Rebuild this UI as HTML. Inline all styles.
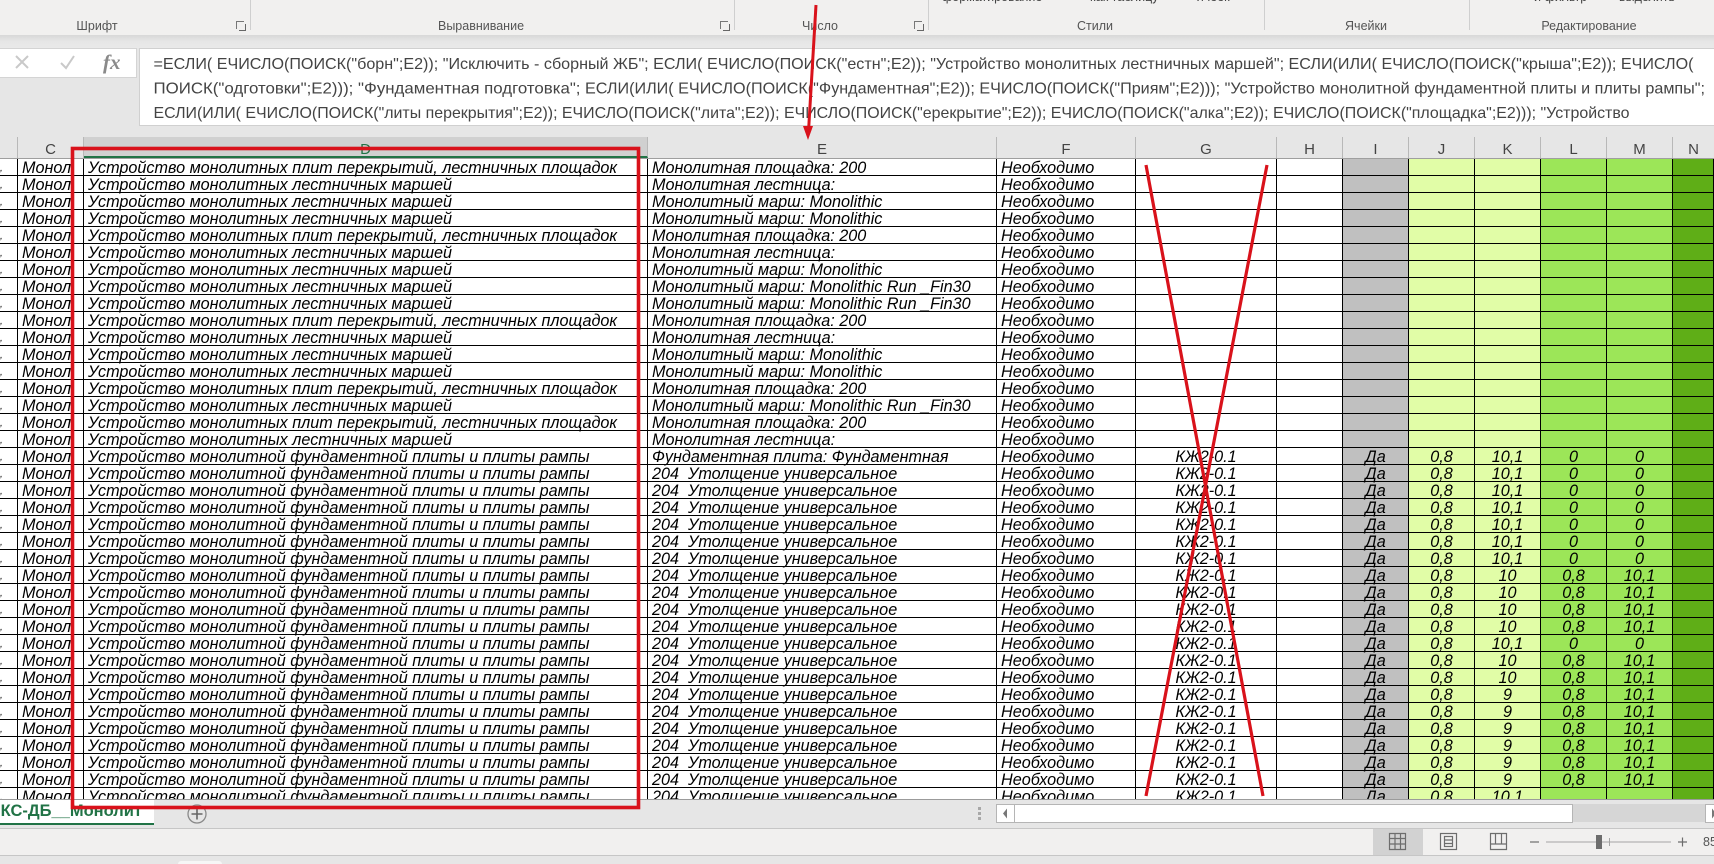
<!DOCTYPE html>
<html lang="ru"><head><meta charset="utf-8"><title>Excel</title>
<style>
html,body{margin:0;padding:0;background:#e6e6e6}
body{width:1714px;height:864px;overflow:hidden;position:relative;font-family:"Liberation Sans","Noto Sans CJK SC",sans-serif}
.a{position:absolute}
.rib{left:0;top:0;width:1714px;height:35px;background:#f1f0ef;overflow:hidden}
.shade{left:0;top:35px;width:1714px;height:13px;background:linear-gradient(#d8d8d8,#e6e6e6 50%,#e9e9e9)}
.gd{top:0;width:1px;height:30px;background:#cfcfcf}
.gl{top:18px;font-size:12.5px;line-height:16px;color:#555;transform:translateX(-50%);white-space:nowrap}
.cut{top:-11px;font-size:12.5px;line-height:16px;color:#444;white-space:nowrap}
.la{top:21px;width:8px;height:8px;border-left:1px solid #777;border-top:1px solid #777;box-sizing:border-box}
.la:after{content:"";position:absolute;right:-2px;bottom:-2px;width:6px;height:6px;border-right:1px solid #666;border-bottom:1px solid #666}
.fxb{left:-2px;top:48px;width:137px;height:28px;background:#fff;border:1px solid #d4d4d4}
.fb{left:139px;top:48px;width:1580px;height:76px;background:#fff;border:1px solid #d0d0d0}
.hdr{left:0;top:137px;width:1714px;height:21px;background:#e6e6e6;border-bottom:1px solid #9f9f9f}
.h{top:0;height:21px;box-sizing:border-box;border-right:1px solid #b8b8b8;font-size:15px;line-height:25px;text-align:center;color:#444}
table{position:absolute;left:0;top:159px;border-collapse:separate;border-spacing:0;table-layout:fixed;width:1714px;font-style:italic;font-size:16.2px;color:#000}
td{height:17px;box-sizing:border-box;border-bottom:1px solid #000;border-right:1px solid #000;padding:3px 0 0 4px;white-space:pre;line-height:13px;vertical-align:top;background:#fff}
td:nth-child(1){border-right:1px solid #000;padding:3px 0 0 0;font-size:10px}
td:nth-child(6),td:nth-child(8),td:nth-child(9),td:nth-child(10),td:nth-child(11),td:nth-child(12){text-align:center;padding:3px 0 0 0}
td:nth-child(8){background:#c0c0c0}
td:nth-child(9),td:nth-child(10){background:#e1fda7}
td:nth-child(11),td:nth-child(12){background:#9ce658}
td:nth-child(13){background:#5fae17}
.clip{left:0;top:159px;width:1714px;height:640px;overflow:hidden}
.tabs{left:0;top:799px;width:1714px;height:29px;background:#e6e6e6;border-top:1px solid #9b9b9b;box-sizing:border-box}
.tab{left:0;top:800px;width:154px;height:25px;background:#fff;border-bottom:2px solid #217346;box-sizing:border-box;font-weight:bold;color:#217346;font-size:16.5px;line-height:22px;text-align:right;padding-right:12px;white-space:nowrap;overflow:hidden}
.status{left:0;top:828px;width:1714px;height:28px;background:#f1f0ef;border-top:1px solid #c6c6c6;border-bottom:1px solid #c6c6c6;box-sizing:border-box}
.f{letter-spacing:-.1px}
</style></head><body>

<div class="a rib">
<div class="a gd" style="left:250px"></div><div class="a gd" style="left:734px"></div><div class="a gd" style="left:928px"></div><div class="a gd" style="left:1264px"></div><div class="a gd" style="left:1469px"></div>
<div class="a gl" style="left:97px">Шрифт</div>
<div class="a gl" style="left:481px">Выравнивание</div>
<div class="a gl" style="left:820px">Число</div>
<div class="a gl" style="left:1095px">Стили</div>
<div class="a gl" style="left:1366px">Ячейки</div>
<div class="a gl" style="left:1589px">Редактирование</div>
<div class="a la" style="left:236px"></div><div class="a la" style="left:720px"></div><div class="a la" style="left:914px"></div>
<div class="a cut" style="left:942px">форматирование</div><div class="a cut" style="left:1090px">как таблицу</div><div class="a cut" style="left:1197px">ячеек</div><div class="a cut" style="left:1534px">и фильтр</div><div class="a cut" style="left:1619px">выделить</div>
</div>
<div class="a shade"></div>

<div class="a fxb"></div>
<div class="a fb"></div>
<svg class="a" style="left:0;top:0" width="1714" height="137">
<g stroke="#c9c9c9" stroke-width="2" fill="none"><path d="M16 56l12 12M28 56l-12 12"/><path d="M61 63l5 5 8-12"/></g>
<text x="103" y="69" font-family="Liberation Serif" font-style="italic" font-weight="bold" font-size="21" fill="#8a8a8a">fx</text>
<g font-family="Liberation Sans" font-size="16" fill="#444">
<text x="153.5" y="69" textLength="1540" lengthAdjust="spacingAndGlyphs">=ЕСЛИ( ЕЧИСЛО(ПОИСК("борн";E2)); "Исключить - сборный ЖБ"; ЕСЛИ( ЕЧИСЛО(ПОИСК("естн";E2)); "Устройство монолитных лестничных маршей"; ЕСЛИ(ИЛИ( ЕЧИСЛО(ПОИСК("крыша";E2)); ЕЧИСЛО(</text>
<text x="153.5" y="93.500" textLength="427" lengthAdjust="spacingAndGlyphs">ПОИСК("одготовки";E2))); "Фундаментная подготовка";</text>
<text x="585" y="93.500" textLength="1120" lengthAdjust="spacingAndGlyphs">ЕСЛИ(ИЛИ( ЕЧИСЛО(ПОИСК("Фундаментная";E2)); ЕЧИСЛО(ПОИСК("Приям";E2))); "Устройство монолитной фундаментной плиты и плиты рампы";</text>
<text x="153.5" y="118" textLength="1476" lengthAdjust="spacingAndGlyphs">ЕСЛИ(ИЛИ( ЕЧИСЛО(ПОИСК("литы перекрытия";E2)); ЕЧИСЛО(ПОИСК("лита";E2)); ЕЧИСЛО(ПОИСК("ерекрытие";E2)); ЕЧИСЛО(ПОИСК("алка";E2)); ЕЧИСЛО(ПОИСК("площадка";E2))); "Устройство</text>
</g></svg>

<div class="a hdr">
<div class="a h" style="left:0;width:18px"></div>
<div class="a h" style="left:18px;width:66px">C</div>
<div class="a h" style="left:84px;width:564px;background:#d0d0d0;color:#217346;border-bottom:2px solid #217346">D</div>
<div class="a h" style="left:648px;width:349px">E</div>
<div class="a h" style="left:997px;width:139px">F</div>
<div class="a h" style="left:1136px;width:141px">G</div>
<div class="a h" style="left:1277px;width:66px">H</div>
<div class="a h" style="left:1343px;width:66px">I</div>
<div class="a h" style="left:1409px;width:66px">J</div>
<div class="a h" style="left:1475px;width:66px">K</div>
<div class="a h" style="left:1541px;width:66px">L</div>
<div class="a h" style="left:1607px;width:66px">M</div>
<div class="a h" style="left:1673px;width:41px;border-right:0">N</div>
</div>

<div class="a clip">
<table style="top:0">
<colgroup><col style="width:18px"><col style="width:66px"><col style="width:564px"><col style="width:349px"><col style="width:139px"><col style="width:141px"><col style="width:66px"><col style="width:66px"><col style="width:66px"><col style="width:66px"><col style="width:66px"><col style="width:66px"><col style="width:41px"></colgroup>
<tr><td>,<td>Монол<td>Устройство монолитных плит перекрытий, лестничных площадок<td>Монолитная площадка: 200<td>Необходимо<td><td><td><td><td><td><td><td>
<tr><td>,<td>Монол<td>Устройство монолитных лестничных маршей<td>Монолитная лестница:<td>Необходимо<td><td><td><td><td><td><td><td>
<tr><td>,<td>Монол<td>Устройство монолитных лестничных маршей<td>Монолитный марш: Monolithic<td>Необходимо<td><td><td><td><td><td><td><td>
<tr><td>,<td>Монол<td>Устройство монолитных лестничных маршей<td>Монолитный марш: Monolithic<td>Необходимо<td><td><td><td><td><td><td><td>
<tr><td>,<td>Монол<td>Устройство монолитных плит перекрытий, лестничных площадок<td>Монолитная площадка: 200<td>Необходимо<td><td><td><td><td><td><td><td>
<tr><td>,<td>Монол<td>Устройство монолитных лестничных маршей<td>Монолитная лестница:<td>Необходимо<td><td><td><td><td><td><td><td>
<tr><td>,<td>Монол<td>Устройство монолитных лестничных маршей<td>Монолитный марш: Monolithic<td>Необходимо<td><td><td><td><td><td><td><td>
<tr><td>,<td>Монол<td>Устройство монолитных лестничных маршей<td>Монолитный марш: Monolithic Run _Fin30<td>Необходимо<td><td><td><td><td><td><td><td>
<tr><td>,<td>Монол<td>Устройство монолитных лестничных маршей<td>Монолитный марш: Monolithic Run _Fin30<td>Необходимо<td><td><td><td><td><td><td><td>
<tr><td>,<td>Монол<td>Устройство монолитных плит перекрытий, лестничных площадок<td>Монолитная площадка: 200<td>Необходимо<td><td><td><td><td><td><td><td>
<tr><td>,<td>Монол<td>Устройство монолитных лестничных маршей<td>Монолитная лестница:<td>Необходимо<td><td><td><td><td><td><td><td>
<tr><td>,<td>Монол<td>Устройство монолитных лестничных маршей<td>Монолитный марш: Monolithic<td>Необходимо<td><td><td><td><td><td><td><td>
<tr><td>,<td>Монол<td>Устройство монолитных лестничных маршей<td>Монолитный марш: Monolithic<td>Необходимо<td><td><td><td><td><td><td><td>
<tr><td>,<td>Монол<td>Устройство монолитных плит перекрытий, лестничных площадок<td>Монолитная площадка: 200<td>Необходимо<td><td><td><td><td><td><td><td>
<tr><td>,<td>Монол<td>Устройство монолитных лестничных маршей<td>Монолитный марш: Monolithic Run _Fin30<td>Необходимо<td><td><td><td><td><td><td><td>
<tr><td>,<td>Монол<td>Устройство монолитных плит перекрытий, лестничных площадок<td>Монолитная площадка: 200<td>Необходимо<td><td><td><td><td><td><td><td>
<tr><td>,<td>Монол<td>Устройство монолитных лестничных маршей<td>Монолитная лестница:<td>Необходимо<td><td><td><td><td><td><td><td>
<tr><td>,<td>Монол<td>Устройство монолитной фундаментной плиты и плиты рампы<td>Фундаментная плита: Фундаментная<td>Необходимо<td>КЖ2-0.1<td><td>Да<td>0,8<td>10,1<td>0<td>0<td>
<tr><td>,<td>Монол<td>Устройство монолитной фундаментной плиты и плиты рампы<td>204  Утолщение универсальное<td>Необходимо<td>КЖ2-0.1<td><td>Да<td>0,8<td>10,1<td>0<td>0<td>
<tr><td>,<td>Монол<td>Устройство монолитной фундаментной плиты и плиты рампы<td>204  Утолщение универсальное<td>Необходимо<td>КЖ2-0.1<td><td>Да<td>0,8<td>10,1<td>0<td>0<td>
<tr><td>,<td>Монол<td>Устройство монолитной фундаментной плиты и плиты рампы<td>204  Утолщение универсальное<td>Необходимо<td>КЖ2-0.1<td><td>Да<td>0,8<td>10,1<td>0<td>0<td>
<tr><td>,<td>Монол<td>Устройство монолитной фундаментной плиты и плиты рампы<td>204  Утолщение универсальное<td>Необходимо<td>КЖ2-0.1<td><td>Да<td>0,8<td>10,1<td>0<td>0<td>
<tr><td>,<td>Монол<td>Устройство монолитной фундаментной плиты и плиты рампы<td>204  Утолщение универсальное<td>Необходимо<td>КЖ2-0.1<td><td>Да<td>0,8<td>10,1<td>0<td>0<td>
<tr><td>,<td>Монол<td>Устройство монолитной фундаментной плиты и плиты рампы<td>204  Утолщение универсальное<td>Необходимо<td>КЖ2-0.1<td><td>Да<td>0,8<td>10,1<td>0<td>0<td>
<tr><td>,<td>Монол<td>Устройство монолитной фундаментной плиты и плиты рампы<td>204  Утолщение универсальное<td>Необходимо<td>КЖ2-0.1<td><td>Да<td>0,8<td>10<td>0,8<td>10,1<td>
<tr><td>,<td>Монол<td>Устройство монолитной фундаментной плиты и плиты рампы<td>204  Утолщение универсальное<td>Необходимо<td>КЖ2-0.1<td><td>Да<td>0,8<td>10<td>0,8<td>10,1<td>
<tr><td>,<td>Монол<td>Устройство монолитной фундаментной плиты и плиты рампы<td>204  Утолщение универсальное<td>Необходимо<td>КЖ2-0.1<td><td>Да<td>0,8<td>10<td>0,8<td>10,1<td>
<tr><td>,<td>Монол<td>Устройство монолитной фундаментной плиты и плиты рампы<td>204  Утолщение универсальное<td>Необходимо<td>КЖ2-0.1<td><td>Да<td>0,8<td>10<td>0,8<td>10,1<td>
<tr><td>,<td>Монол<td>Устройство монолитной фундаментной плиты и плиты рампы<td>204  Утолщение универсальное<td>Необходимо<td>КЖ2-0.1<td><td>Да<td>0,8<td>10,1<td>0<td>0<td>
<tr><td>,<td>Монол<td>Устройство монолитной фундаментной плиты и плиты рампы<td>204  Утолщение универсальное<td>Необходимо<td>КЖ2-0.1<td><td>Да<td>0,8<td>10<td>0,8<td>10,1<td>
<tr><td>,<td>Монол<td>Устройство монолитной фундаментной плиты и плиты рампы<td>204  Утолщение универсальное<td>Необходимо<td>КЖ2-0.1<td><td>Да<td>0,8<td>10<td>0,8<td>10,1<td>
<tr><td>,<td>Монол<td>Устройство монолитной фундаментной плиты и плиты рампы<td>204  Утолщение универсальное<td>Необходимо<td>КЖ2-0.1<td><td>Да<td>0,8<td>9<td>0,8<td>10,1<td>
<tr><td>,<td>Монол<td>Устройство монолитной фундаментной плиты и плиты рампы<td>204  Утолщение универсальное<td>Необходимо<td>КЖ2-0.1<td><td>Да<td>0,8<td>9<td>0,8<td>10,1<td>
<tr><td>,<td>Монол<td>Устройство монолитной фундаментной плиты и плиты рампы<td>204  Утолщение универсальное<td>Необходимо<td>КЖ2-0.1<td><td>Да<td>0,8<td>9<td>0,8<td>10,1<td>
<tr><td>,<td>Монол<td>Устройство монолитной фундаментной плиты и плиты рампы<td>204  Утолщение универсальное<td>Необходимо<td>КЖ2-0.1<td><td>Да<td>0,8<td>9<td>0,8<td>10,1<td>
<tr><td>,<td>Монол<td>Устройство монолитной фундаментной плиты и плиты рампы<td>204  Утолщение универсальное<td>Необходимо<td>КЖ2-0.1<td><td>Да<td>0,8<td>9<td>0,8<td>10,1<td>
<tr><td>,<td>Монол<td>Устройство монолитной фундаментной плиты и плиты рампы<td>204  Утолщение универсальное<td>Необходимо<td>КЖ2-0.1<td><td>Да<td>0,8<td>9<td>0,8<td>10,1<td>
<tr><td>,<td>Монол<td>Устройство монолитной фундаментной плиты и плиты рампы<td>204  Утолщение универсальное<td>Необходимо<td>КЖ2-0.1<td><td>Да<td>0,8<td>10,1<td><td><td>
</table>
</div>

<div class="a tabs"></div>
<div class="a tab">КС-ДБ__Монолит</div>
<div class="a status"></div>
<div class="a" style="left:1373px;top:829px;width:50px;height:26px;background:#d2d2d2"></div>
<div class="a" style="left:178px;top:861px;width:44px;height:3px;background:#f6f6f6;border-radius:3px 3px 0 0"></div>
<div class="a" style="left:1703px;top:834px;font-size:12.5px;line-height:16px;color:#555">85</div>

<svg class="a" style="left:0;top:0;pointer-events:none" width="1714" height="864">
<!-- tab bar -->
<circle cx="197" cy="814" r="9" fill="none" stroke="#8a8a8a" stroke-width="1.3"/>
<path d="M191.5 814h11M197 808.500v11" stroke="#666" stroke-width="1.6"/>
<g fill="#a8a8a8"><rect x="978" y="807" width="3" height="3"/><rect x="978" y="812" width="3" height="3"/><rect x="978" y="817" width="3" height="3"/></g>
<rect x="1014" y="804" width="692" height="18" fill="#d6d6d6"/>
<rect x="996.500" y="804.500" width="18" height="18" fill="#fff" stroke="#b5b5b5"/>
<path d="M1003 813.500l4-5v10z" fill="#777"/>
<rect x="1014.500" y="804.500" width="558" height="18" fill="#fff" stroke="#b5b5b5"/>
<rect x="1705.500" y="804.500" width="18" height="18" fill="#fff" stroke="#b5b5b5"/>
<path d="M1712 808.500l4 5-4 5z" fill="#777"/>
<!-- status icons -->
<g fill="none" stroke="#6d6d6d" stroke-width="1.2">
<path d="M1389.500 833.500h16v16h-16zM1389.500 838.500h16M1389.500 844h16M1395 833.500v16M1400.500 833.500v16"/>
<rect x="1440.500" y="833.500" width="16" height="16"/><rect x="1444.500" y="836.500" width="8" height="10"/>
<path d="M1444.500 840h8M1444.500 843.500h8"/>
<path d="M1490.500 833.500h16v16h-16zM1490.500 844h16M1495.500 833.500v10.500M1501.500 833.500v10.500"/>
<path d="M1530 842h9"/><path d="M1678 842h9M1682.500 837.500v9"/>
</g>
<path d="M1546 842h125" stroke="#a5a5a5" stroke-width="1"/>
<path d="M1609.500 838v8" stroke="#a5a5a5"/>
<rect x="1596" y="835" width="6" height="14" fill="#6d6d6d"/>
<!-- red annotations -->
<g fill="none" stroke="#d9121b">
<rect x="72.500" y="148.500" width="566" height="659" stroke-width="3.600"/>
<path d="M1146 165L1263 796M1267 165L1146 796" stroke-width="3.200"/>
<path d="M816 5L808.700 128" stroke-width="3"/>
</g>
<path d="M808 140l-5-14h10z" fill="#d9121b"/>
</svg>
</body></html>
